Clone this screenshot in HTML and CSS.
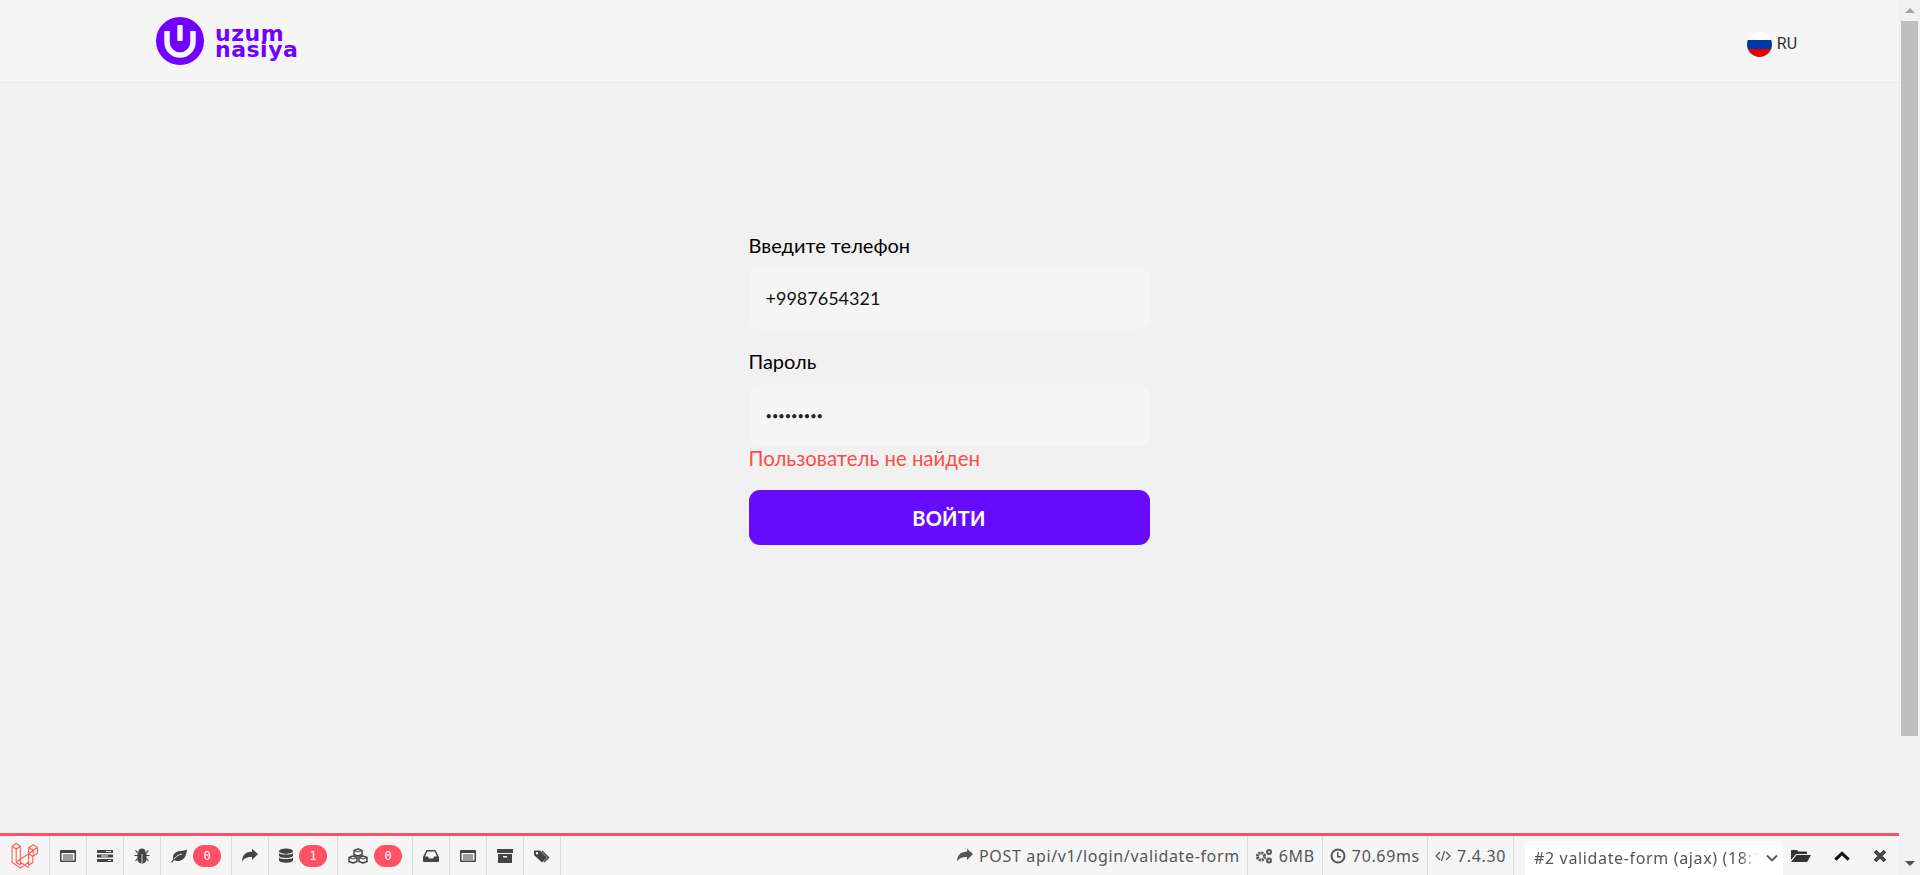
FILE: index.html
```html
<!DOCTYPE html>
<html lang="ru">
  <head>
    <meta charset="UTF-8" />
    <meta name="viewport" content="width=device-width, initial-scale=1.0" />
    <title>Uzum Nasiya</title>
    <link rel="stylesheet" href="styles.css">
  </head>
  <body>
    <div class="page">
      <header class="top">
        <a class="logo" href="#">
          <svg class="logo-mark" viewBox="0 0 48 48">
            <circle cx="24" cy="24" r="24" fill="#7000ff"/>
            <path d="M11 14v11a13 13 0 0 0 26 0V14" fill="none" stroke="#f5f5f5" stroke-width="5.5"/>
            <rect x="21.3" y="8" width="5.4" height="16" rx="1" fill="#f5f5f5"/>
          </svg>
          <span class="logo-text"><span class="logo-line">uzum</span><span class="logo-line">nasiya</span></span>
        </a>
        <div class="lang">
          <svg class="flag" viewBox="0 0 25 25">
            <clipPath id="flag-clip"><circle cx="12.5" cy="12.5" r="12.5"/></clipPath>
            <g clip-path="url(#flag-clip)">
              <rect width="25" height="8" fill="#fff"/>
              <rect y="8" width="25" height="9" fill="#0039a6"/>
              <rect y="17" width="25" height="8" fill="#e60000"/>
            </g>
          </svg>
          <span class="lang-name">RU</span>
        </div>
      </header>

      <main class="content">
        <form class="login">
          <label class="field-label">Введите телефон</label>
          <input class="field" type="text" value="+9987654321" />
          <label class="field-label second">Пароль</label>
          <input class="field secret" type="password" value="123456789" />
          <p class="error">Пользователь не найден</p>
          <button class="submit" type="button">ВОЙТИ</button>
        </form>
      </main>

      <footer class="debugbar">
        <div class="brand">
          <svg viewBox="0 0 27 27" width="28" height="33" preserveAspectRatio="none" fill="none" stroke="#ff5a50" stroke-width="1" stroke-linejoin="round">
            <path d="M1 6l4-2.300 4 2.300v13l8 4.500M1 6v13l8 4.800 8-4.800M5 8.300l4-2.300M5 8.300L1 6M5 8.300V19l4 2.300M9 16.500l8-4.500 4-2.300M9 21.300v-4.800l-4 2.500M17 12l4 2.300v5l-4 2.400zM21 14.300l4.500-2.700V7l-4-2.300L17 7v5M17 7l4.500 2.300 4-2.300M21.500 9.300v5"/>
          </svg>
        </div>
        <div class="tab"><svg class="ico" viewBox="0 0 16 16"><path d="M1 2h14a1 1 0 0 1 1 1v10a1 1 0 0 1-1 1H1a1 1 0 0 1-1-1V3a1 1 0 0 1 1-1zm.5 3v7.500h13V5zM3 6.500h10v1H3zM3 8.500h10v1H3zM3 10.500h10v1H3z" fill-rule="evenodd"/></svg></div>
        <div class="tab"><svg class="ico" viewBox="0 0 16 16"><path d="M0 2h16v3H0zM0 6.500h16v3H0zM0 11h16v3H0z"/><path d="M9 3h5v1H9zM4 7.500h7v1H4zM11 12h3v1h-3z" fill="#f5f5f5"/></svg></div>
        <div class="tab"><svg class="ico" viewBox="0 0 16 16"><path d="M5 4a3 3 0 0 1 6 0zM4 5h8v6a4 4 0 0 1-8 0zM3.500 4.500l-2-2M12.500 4.500l2-2M3.500 7.500H.5M12.500 7.500h3M3.500 10.500l-2 2.500M12.500 10.500l2 2.500" stroke="currentColor" stroke-width="1.100"/><path d="M7.600 6h.8v9h-.8z" fill="#f5f5f5"/></svg></div>
        <div class="tab"><svg class="ico" viewBox="0 0 16 16"><path d="M16 1.500C15.500 8 13 13 7 13c-1.500 0-3-.4-4-1l-2 3-1-.7 2.300-3.300C1 6 5 3.500 9 3c3-.4 5.500-.5 7-1.500z"/><path d="M3 11c2-3 5-4.500 8-5" fill="none" stroke="#f5f5f5" stroke-width=".9"/></svg><span class="badge">0</span></div>
        <div class="tab"><svg class="ico" viewBox="0 0 16 16"><path d="M16 6L10 .800v3C5 3.800 0 6 0 14c1.500-3.500 4-5 10-5v3z"/></svg></div>
        <div class="tab tight"><svg class="ico" viewBox="1 0 14 16"><ellipse cx="8" cy="3.200" rx="7" ry="2.700"/><path d="M1 5c1 2 13 2 14 0v3c-1 2.500-13 2.500-14 0zM1 9.500c1 2 13 2 14 0v3c-1 3-13 3-14 0z"/></svg><span class="badge">1</span></div>
        <div class="tab"><svg class="ico wide" viewBox="0 0 20 16"><path d="M10 1l4 1.500v4L10 8 6 6.500v-4zM5 8l4 1.500v4L5 15l-4-1.500v-4zM15 8l4 1.500v4L15 15l-4-1.500v-4z" fill="#f5f5f5" stroke="currentColor" stroke-width="1.500" stroke-linejoin="round"/><path d="M6 2.500l4 1.500 4-1.500M1 9.500l4 1.500 4-1.500M11 9.500l4 1.500 4-1.500" fill="none" stroke="currentColor" stroke-width="1"/></svg><span class="badge">0</span></div>
        <div class="tab"><svg class="ico" viewBox="0 0 16 16"><path d="M3.500 2h9L16 9v4a1 1 0 0 1-1 1H1a1 1 0 0 1-1-1V9zm.8 1.500L2 8.500h3l1 2h4l1-2h3l-2.300-5z" fill-rule="evenodd"/></svg></div>
        <div class="tab"><svg class="ico" viewBox="0 0 16 16"><path d="M1 2h14a1 1 0 0 1 1 1v10a1 1 0 0 1-1 1H1a1 1 0 0 1-1-1V3a1 1 0 0 1 1-1zm.5 3v7.500h13V5zM3 6.500h10v1H3zM3 8.500h10v1H3zM3 10.500h10v1H3z" fill-rule="evenodd"/></svg></div>
        <div class="tab"><svg class="ico" viewBox="0 0 16 16"><path d="M0 1h16v4H0zM1 6h14v9H1zm5 2v1.500h4V8z" fill-rule="evenodd"/></svg></div>
        <div class="tab"><svg class="ico" viewBox="0 0 16 16"><path d="M0 2.500h6L13 9.500 8 14.500 0 7zM3 4a1.200 1.200 0 1 0 0 2.400A1.200 1.200 0 0 0 3 4z" fill-rule="evenodd"/><path d="M8.500 2.500l7 7-5 5-1-1 4-4-6-6z"/></svg></div>

        <div class="info route"><svg class="ico" viewBox="0 0 16 16"><path d="M16 6L10 .800v3C5 3.800 0 6 0 14c1.500-3.500 4-5 10-5v3z"/></svg>POST api/v1/login/validate-form</div>
        <div class="info"><svg class="ico cogs" viewBox="0 0 18 16"><circle cx="6" cy="8.500" r="3.600" fill="none" stroke="currentColor" stroke-width="3" stroke-dasharray="2 .8"/><circle cx="14" cy="4" r="2" fill="none" stroke="currentColor" stroke-width="2"/><circle cx="14" cy="12.500" r="2" fill="none" stroke="currentColor" stroke-width="2"/></svg>6MB</div>
        <div class="info"><svg class="ico" viewBox="0 0 16 16"><circle cx="8" cy="8" r="6.500" fill="none" stroke="currentColor" stroke-width="2"/><path d="M7 4h1.500v4H11v1.500H7z"/></svg>70.69ms</div>
        <div class="info"><svg class="ico" viewBox="0 0 16 16"><path d="M5 4L1 8l4 4M11 4l4 4-4 4M9.500 3l-3 10" fill="none" stroke="currentColor" stroke-width="1.200"/></svg>7.4.30</div>

        <div class="controls">
          <div class="request">
            <span class="request-text">#2 validate-form (ajax) (18:1</span>
            <svg class="chevron" viewBox="0 0 12 8"><path d="M1 1.500l5 5 5-5" fill="none" stroke="#555" stroke-width="1.800"/></svg>
          </div>
          <svg class="ctrl folder" viewBox="0 0 20 16"><path d="M0 3a1 1 0 0 1 1-1h5l1.500 1.500H15a1 1 0 0 1 1 1V6H5L0 12zM5.500 7H20l-4 7H0z"/></svg>
          <svg class="ctrl up" viewBox="0 0 18 12"><path d="M1.500 10L9 3l7.500 7" fill="none" stroke="#111" stroke-width="3.400"/></svg>
          <svg class="ctrl close" viewBox="0 0 14 14"><path d="M2 2l10 10M12 2L2 12" fill="none" stroke="#444" stroke-width="3.800"/></svg>
        </div>
      </footer>
    </div>

    <!-- полоса прокрутки как на скриншоте -->
    <aside class="scrollbar">
      <span class="arrow arrow-up"></span>
      <span class="thumb"></span>
      <span class="arrow arrow-down"></span>
    </aside>
  </body>
</html>
```

FILE: styles.css
```css
/* Общие стили */
* {
  margin: 0;
  padding: 0;
  box-sizing: border-box;
}

body {
  font-family: "Lato", "Noto Sans", sans-serif;
  display: flex;
  height: 100vh;
  overflow: hidden;
  background-color: #f1f1f1;
  color: #000;
}

.page {
  flex-grow: 1;
  display: flex;
  flex-direction: column;
  min-width: 0;
}

/* Шапка */
.top {
  height: 83px;
  flex-shrink: 0;
  display: flex;
  align-items: center;
  justify-content: space-between;
  padding: 0 102px 0 156px;
  background-color: #f5f5f5;
  border-bottom: 1px solid #e9e9e9;
}

.logo {
  display: flex;
  align-items: center;
  gap: 11px;
  text-decoration: none;
}

.logo-mark {
  width: 48px;
  height: 48px;
}

.logo-text {
  padding-top: 2px;
  font-family: "DejaVu Sans", sans-serif;
  font-weight: 700;
  font-size: 22px;
  letter-spacing: 0.5px;
  color: #7000ff;
}

.logo-line {
  display: block;
  height: 16px;
  line-height: 16px;
}

.lang {
  align-self: flex-start;
  display: flex;
  align-items: flex-start;
  gap: 5px;
  margin-top: 32px;
  font-family: "Roboto", sans-serif;
  font-size: 16px;
  color: #333;
}

.lang-name {
  margin-top: 2px;
}

.flag {
  width: 25px;
  height: 25px;
}

/* Форма входа */
.content {
  flex-grow: 1;
  padding-top: 150px;
  display: flex;
  justify-content: center;
}

.login {
  width: 401px;
  margin-left: -1px;
  display: flex;
  flex-direction: column;
}

.field-label {
  font-size: 20px;
  line-height: 24px;
  margin-bottom: 10px;
}

.field-label.second {
  margin-top: 20px;
  margin-bottom: 11px;
}

.field {
  height: 62px;
  padding: 0 17px;
  border: none;
  border-radius: 12px;
  background-color: #f5f5f5;
  font-family: "Lato", sans-serif;
  font-size: 18px;
  color: #111;
  outline: none;
}

.field.secret {
  font-size: 11px;
  color: #222;
}

.error {
  font-size: 20.4px;
  line-height: 24px;
  color: #ff4a4a;
}

.submit {
  height: 55px;
  margin-top: 20px;
  border: none;
  border-radius: 11px;
  background-color: #670cfa;
  color: #fff;
  font-family: "Lato", sans-serif;
  font-weight: 700;
  font-size: 20px;
  letter-spacing: 0.3px;
}

/* Панель отладки */
.debugbar {
  height: 42px;
  flex-shrink: 0;
  display: flex;
  align-items: stretch;
  background-color: #f5f5f5;
  border-top: 3px solid #ff5066;
  font-family: "Noto Sans", sans-serif;
  font-size: 16px;
  letter-spacing: 0.65px;
  color: #555;
}

.brand {
  width: 50px;
  display: flex;
  align-items: center;
  justify-content: center;
  border-right: 1px solid #ddd;
}

.tab {
  display: flex;
  align-items: center;
  gap: 6px;
  padding: 0 10px;
  border-right: 1px solid #ddd;
  color: #444;
}

.tab.tight .ico {
  width: 14px;
}

.ico {
  width: 16px;
  height: 16px;
  flex-shrink: 0;
  fill: currentColor;
}

.ico.wide {
  width: 20px;
}

.ico.cogs {
  width: 18px;
}

.badge {
  min-width: 28px;
  height: 22px;
  padding: 0 8px;
  border-radius: 11px;
  background-color: #ff5066;
  color: #fff;
  font-family: "DejaVu Sans Mono", monospace;
  font-size: 12px;
  letter-spacing: 0;
  line-height: 22px;
  text-align: center;
}

.info {
  display: flex;
  align-items: center;
  gap: 6px;
  padding: 0 7px;
  border-right: 1px solid #ddd;
}

.route {
  margin-left: auto;
}

.controls {
  display: flex;
  align-items: center;
  padding: 0 12px 0 11px;
}

.request {
  width: 258px;
  height: 34px;
  align-self: flex-end;
  display: flex;
  align-items: center;
  justify-content: space-between;
  padding: 0 5px 0 9px;
  border-radius: 5px 5px 0 0;
  background-color: #fff;
}

.request-text {
  width: 224px;
  overflow: hidden;
  white-space: nowrap;
  -webkit-mask-image: linear-gradient(90deg, #000 92%, transparent);
  mask-image: linear-gradient(90deg, #000 92%, transparent);
}

.chevron {
  width: 12px;
  height: 8px;
}

.ctrl {
  height: 16px;
  flex-shrink: 0;
  fill: #333;
}

.folder {
  width: 20px;
  margin-left: 8px;
}

.up {
  width: 16px;
  margin-left: 23px;
}

.close {
  width: 14px;
  margin-left: 23px;
}

/* Полоса прокрутки */
.scrollbar {
  width: 21px;
  flex-shrink: 0;
  display: flex;
  flex-direction: column;
  align-items: center;
  background-color: #f1f1f1;
}

.thumb {
  width: 17px;
  height: 715px;
  background-color: #bebebe;
}

.arrow {
  flex-grow: 1;
  display: flex;
  align-items: center;
  justify-content: center;
}

.arrow-up {
  height: 21px;
  flex-grow: 0;
}

.arrow-up::after,
.arrow-down::after {
  content: "";
  border-left: 5px solid transparent;
  border-right: 5px solid transparent;
}

.arrow-up::after {
  border-bottom: 5px solid #a3a3a3;
}

.arrow-down {
  align-items: flex-end;
  padding-bottom: 9px;
}

.arrow-down::after {
  border-top: 5px solid #505050;
}
```
